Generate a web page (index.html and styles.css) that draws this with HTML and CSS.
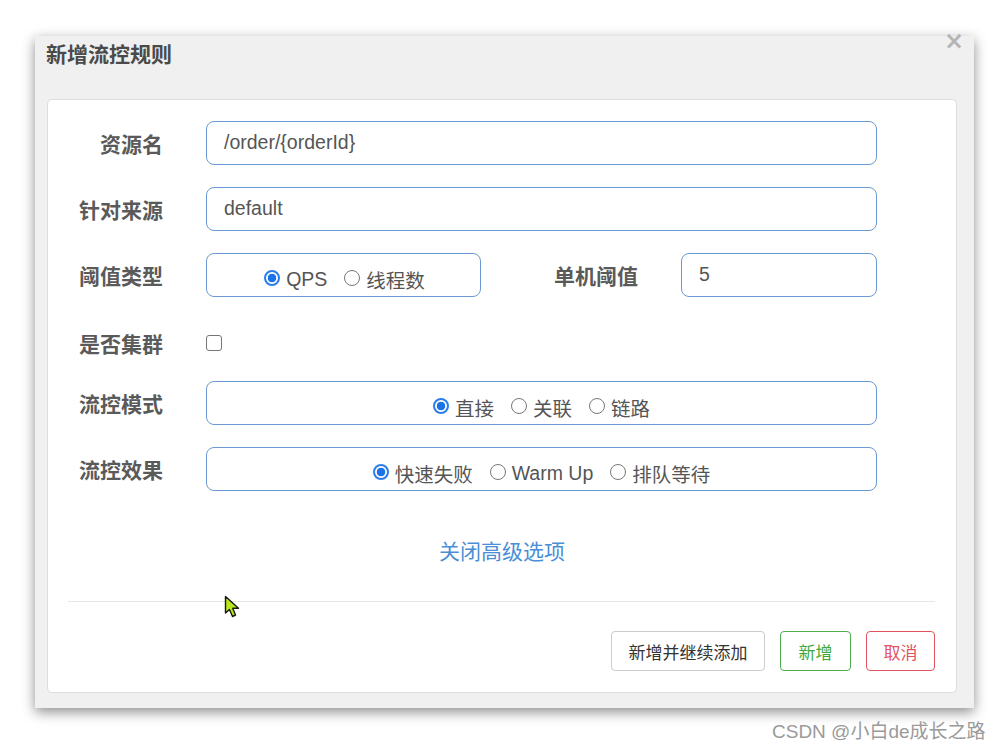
FILE: index.html
```html
<!DOCTYPE html>
<html lang="zh-CN">
<head>
<meta charset="utf-8">
<title>新增流控规则</title>
<link rel="stylesheet" href="styles.css">
</head>
<body>
<div class="dialog">
  <div class="dialog-header">
    <div class="dialog-title">新增流控规则</div>
    <span class="dialog-close">×</span>
  </div>
  <div class="card">
    <div class="form">
      <div class="row">
        <div class="label">资源名</div>
        <div class="control"><div class="input">/order/{orderId}</div></div>
      </div>
      <div class="row">
        <div class="label">针对来源</div>
        <div class="control"><div class="input">default</div></div>
      </div>
      <div class="row">
        <div class="label">阈值类型</div>
        <div class="control split">
          <div class="radio-box narrow">
            <span class="opt"><span class="radio checked"></span>QPS</span>
            <span class="opt"><span class="radio"></span>线程数</span>
          </div>
          <div class="label inner-label">单机阈值</div>
          <div class="input small">5</div>
        </div>
      </div>
      <div class="row check-row">
        <div class="label">是否集群</div>
        <div class="control"><span class="checkbox"></span></div>
      </div>
      <div class="row">
        <div class="label">流控模式</div>
        <div class="control">
          <div class="radio-box">
            <span class="opt"><span class="radio checked"></span>直接</span>
            <span class="opt"><span class="radio"></span>关联</span>
            <span class="opt"><span class="radio"></span>链路</span>
          </div>
        </div>
      </div>
      <div class="row">
        <div class="label">流控效果</div>
        <div class="control">
          <div class="radio-box">
            <span class="opt"><span class="radio checked"></span>快速失败</span>
            <span class="opt"><span class="radio"></span>Warm Up</span>
            <span class="opt"><span class="radio"></span>排队等待</span>
          </div>
        </div>
      </div>
    </div>
    <div class="advanced"><a class="link">关闭高级选项</a></div>
    <div class="divider"></div>
    <div class="footer">
      <button class="btn btn-default">新增并继续添加</button>
      <button class="btn btn-success">新增</button>
      <button class="btn btn-danger">取消</button>
    </div>
    <svg class="cursor" width="18" height="24" viewBox="0 0 18 24">
      <path d="M1.5 1.5 L1.5 18 L5.5 14.5 L8.5 21.5 L11.5 20 L8.7 13.3 L14.5 13.3 Z" fill="#b8e81c" stroke="#1a1a1a" stroke-width="1.4" stroke-linejoin="round"/>
    </svg>
  </div>
</div>
<div class="watermark">CSDN @小白de成长之路</div>
</body>
</html>
```
FILE: styles.css
```css
html, body {
  margin: 0;
  padding: 0;
  background: #ffffff;
}
body {
  font-family: "Liberation Sans", "Noto Sans CJK SC", Arial, sans-serif;
  color: #555;
  width: 1001px;
  height: 749px;
  overflow: hidden;
  position: relative;
}
.dialog {
  position: relative;
  margin: 36px 0 0 35px;
  width: 939px;
  height: 672px;
  background: #f0f0f0;
  box-shadow: 0 4px 12px rgba(0,0,0,0.45);
  display: flex;
  flex-direction: column;
  box-sizing: border-box;
}
.dialog-header {
  height: 63px;
  flex: none;
}
.dialog-title {
  padding-left: 11px;
  line-height: 34px;
  font-size: 21px;
  font-weight: 700;
  color: #4a4a4a;
  font-family: "Noto Sans CJK SC", sans-serif;
}
.dialog-close {
  position: absolute;
  right: 10px;
  top: -5px;
  font-size: 24px;
  line-height: 20px;
  color: #b5b5b5;
  font-weight: 700;
  font-family: "DejaVu Sans", sans-serif;
}
.card {
  position: relative;
  margin: 0 17px 0 12px;
  height: 594px;
  background: #fff;
  border: 1px solid #dedede;
  border-radius: 5px;
  box-sizing: border-box;
  display: flex;
  flex-direction: column;
}
.form {
  padding: 21px 79px 0 29px;
  display: flex;
  flex-direction: column;
  gap: 22px;
}
.row {
  display: flex;
  align-items: center;
  height: 44px;
}
.check-row {
  height: 40px;
  padding-top: 8px;
  box-sizing: border-box;
}
.label {
  width: 86px;
  flex: none;
  text-align: right;
  font-size: 21px;
  font-weight: 700;
  color: #5a5a5a;
  margin-right: 43px;
  white-space: nowrap;
  font-family: "Noto Sans CJK SC", sans-serif;
}
.control {
  flex: 1;
  display: flex;
  align-items: center;
  height: 100%;
}
.input, .radio-box {
  box-sizing: border-box;
  height: 44px;
  border: 1.5px solid #6a9ad3;
  border-radius: 8px;
  font-size: 19.5px;
  color: #555;
  display: flex;
  align-items: center;
}
.input {
  flex: 1;
  padding-left: 17px;
  padding-bottom: 2px;
}
.input.small {
  flex: none;
  width: 196px;
  padding-left: 17px;
}
.radio-box {
  flex: 1;
  justify-content: center;
  gap: 17px;
  padding-top: 8px;
}
.radio-box.narrow {
  flex: none;
  width: 275px;
  padding-left: 2px;
}
.split .inner-label {
  flex: 1;
  width: auto;
  margin-right: 43px;
}
.opt {
  display: inline-flex;
  align-items: center;
  gap: 6px;
  font-size: 19.5px;
  color: #555;
  font-family: "Liberation Sans", "Noto Sans CJK SC", sans-serif;
  white-space: nowrap;
}
.radio {
  width: 16px;
  height: 16px;
  box-sizing: border-box;
  border: 1.3px solid #777;
  border-radius: 50%;
  display: inline-block;
  background: #fff;
  margin-top: -2px;
}
.radio.checked {
  border: 2px solid #2b7de9;
  background: radial-gradient(circle, #1a73e8 0 4px, #fff 4.6px);
}
.checkbox {
  width: 16px;
  height: 16px;
  box-sizing: border-box;
  border: 1.5px solid #767676;
  border-radius: 3px;
  display: inline-block;
}
.advanced {
  margin-top: 44px;
  text-align: center;
  line-height: 30px;
  height: 30px;
}
.link {
  font-size: 21px;
  color: #4a8fd6;
  font-family: "Noto Sans CJK SC", sans-serif;
  cursor: pointer;
}
.divider {
  margin: 36px 21px 0 20px;
  height: 1px;
  background: #e6e6e6;
}
.footer {
  display: flex;
  justify-content: flex-end;
  gap: 15px;
  padding: 29px 21px 0 0;
}
.btn {
  height: 40px;
  box-sizing: border-box;
  background: #fff;
  border-radius: 4px;
  font-size: 17px;
  font-family: "Noto Sans CJK SC", sans-serif;
  padding: 0;
  white-space: nowrap;
  cursor: pointer;
}
.btn-default {
  width: 154px;
  border: 1px solid #cccccc;
  color: #333;
}
.btn-success {
  width: 71px;
  border: 1.5px solid #4cae4c;
  color: #3ea83e;
}
.btn-danger {
  width: 69px;
  border: 1.5px solid #e0535f;
  color: #e0535f;
}
.cursor {
  position: absolute;
  left: 176px;
  top: 495px;
}
.watermark {
  position: absolute;
  left: 772px;
  top: 716px;
  font-size: 19px;
  color: #9a9a9a;
  font-family: "Liberation Sans", "Noto Sans CJK SC", sans-serif;
  white-space: nowrap;
}
```
